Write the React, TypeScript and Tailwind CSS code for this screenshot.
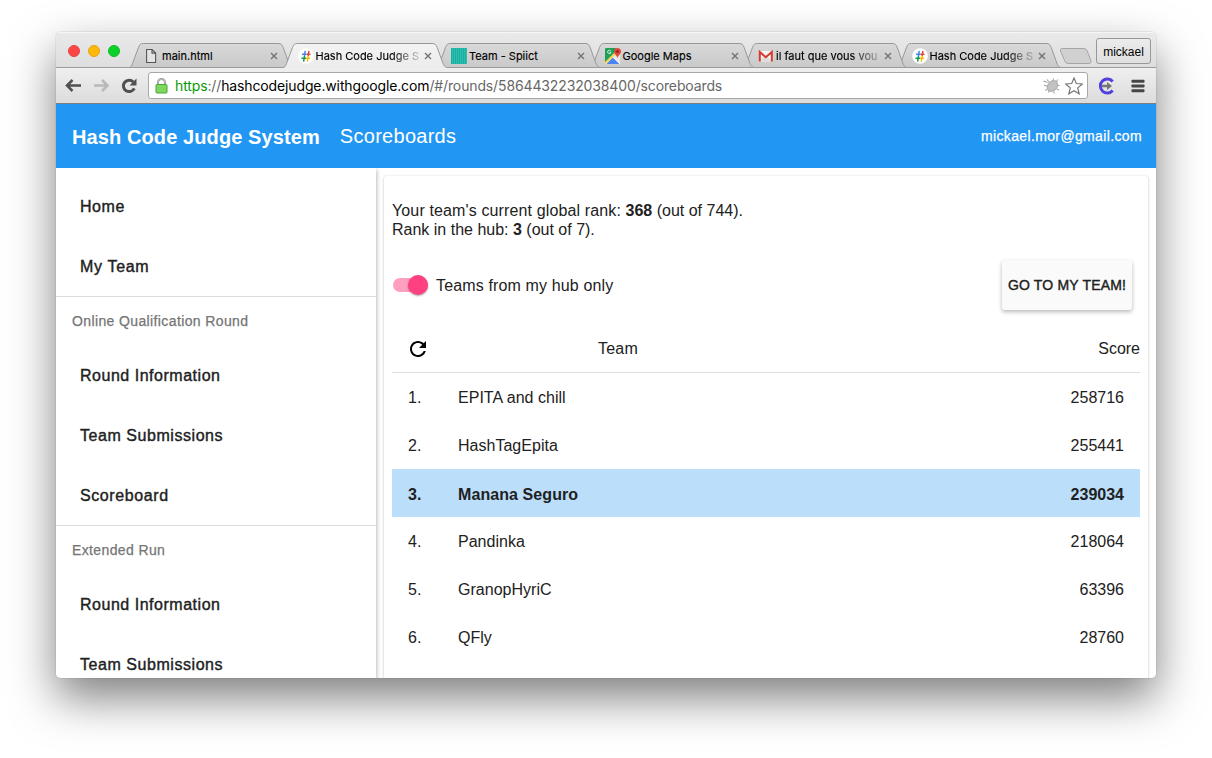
import React from "react";

const MEDIUM = "[-webkit-text-stroke:0.4px_currentColor]";

function HashIcon() {
  return (
    <svg width="16" height="16" viewBox="0 0 16 16" fill="none" strokeWidth="1.5">
      <circle cx="8" cy="8" r="7.800" fill="#fff" stroke="none" />
      <path d="M7.200 2.800 6.500 8" stroke="#4285f4" />
      <path d="M6.500 8 5.600 13.600" stroke="#0f9d58" />
      <path d="M10.900 2.800 10.200 8" stroke="#ea4335" />
      <path d="M10.200 8 9.300 13.600" stroke="#fbbc05" />
      <path d="M4 6.200H8.500" stroke="#4285f4" />
      <path d="M8.500 6.200h4" stroke="#ea4335" />
      <path d="M3.500 10.200H8" stroke="#0f9d58" />
      <path d="M8 10.200h4" stroke="#fbbc05" />
    </svg>
  );
}

function FileIcon() {
  return (
    <svg width="16" height="16" viewBox="0 0 16 16" fill="#e4e4e4" stroke="#555" strokeWidth="1.1">
      <path d="M2.600 1.500h5.400l3.600 3.600v9.400h-9z" />
      <path d="M8 1.500v3.600h3.600" fill="none" />
    </svg>
  );
}

function StripesIcon() {
  return (
    <svg width="16" height="16" viewBox="0 0 16 16">
      <rect width="16" height="16" fill="#13b1a2" />
      {[1, 3, 5, 7, 9, 11, 13, 15].map((x) => (
        <rect key={x} x={x} width="0.8" height="16" fill="#3dbfb2" />
      ))}
    </svg>
  );
}

function MapsIcon() {
  return (
    <svg width="16" height="16" viewBox="0 0 16 16">
      <rect width="15" height="16" rx="1" fill="#e8e8e8" />
      <path d="M0 1a1 1 0 0 1 1-1h10L9.500 6.500 0 15z" fill="#1fa05a" />
      <path d="M1.500 16 8 9.300 15 16z" fill="#4a86f0" />
      <path d="M0 15.500 11 4.500" stroke="#fbd34c" strokeWidth="2" />
      <path d="M8 9.300 15 16" stroke="#fff" strokeWidth="1" />
      <path d="M5.900 3.200A1.700 1.700 0 1 0 6 4.400H4.500" fill="none" stroke="#fff" strokeWidth="0.8" />
      <path d="M12.500 0A3.500 3.500 0 0 1 16 3.500C16 6 13 7 12.500 10.500 12 7 9 6 9 3.500A3.500 3.500 0 0 1 12.500 0z" fill="#e0453a" />
      <circle cx="12.500" cy="3.500" r="1.300" fill="#7b231e" />
    </svg>
  );
}

function GmailIcon() {
  return (
    <svg width="16" height="16" viewBox="0 0 16 16">
      <path d="M1 3h13v10.500H1z" fill="#f5f5f5" />
      <path d="M1 13.500 6 8h3l5 5.500z" fill="#dedede" />
      <path d="M1.800 13.500V4L7.800 9.200 13.800 4v9.500" fill="none" stroke="#d8392f" strokeWidth="2" />
    </svg>
  );
}

function Close() {
  return (
    <svg className="shrink-0" width="8" height="8" viewBox="0 0 8 8" stroke="#727272" strokeWidth="1.4">
      <path d="M1 1l6 6M7 1 1 7" />
    </svg>
  );
}

const tabs = [
  { title: "main.html", icon: <FileIcon />, z: "z-[5]", fade: false },
  { title: "Hash Code Judge S", icon: <HashIcon />, z: "z-10", fade: true },
  { title: "Team - Spiict", icon: <StripesIcon />, z: "z-[4]", fade: false },
  { title: "Google Maps", icon: <MapsIcon />, z: "z-[3]", fade: false },
  { title: "il faut que vous vou", icon: <GmailIcon />, z: "z-[2]", fade: true },
  { title: "Hash Code Judge S", icon: <HashIcon />, z: "z-[1]", fade: true },
];

function TabStrip() {
  return (
    <div className="flex h-9 shrink-0 items-end rounded-t-[5px] border-t border-[#f6f6f6] bg-linear-to-b from-[#e9e9e9] to-[#dedede] shadow-[inset_0_-1px_0_#9b9b9b]">
      <div className="mb-[11px] ml-3 flex gap-2">
        <i className="size-3 rounded-full border border-[#e2443f] bg-[#fc4744]" />
        <i className="size-3 rounded-full border border-[#e6a412] bg-[#fdb90b]" />
        <i className="size-3 rounded-full border border-[#12b82a] bg-[#0bd129]" />
      </div>
      <div className="ml-[8px] flex">
        {tabs.map((t, i) => {
          const active = i === 1;
          return (
            <div key={i} className={`relative mr-[-13.500px] h-[25px] w-[167px] ${t.z}`}>
              <svg className="absolute inset-0" width="167" height="25" viewBox="0 0 167 25">
                <defs>
                  <linearGradient id={`tab${i}`} x1="0" x2="0" y1="0" y2="1">
                    <stop offset="0" stopColor={active ? "#f3f3f3" : "#d9d9d9"} />
                    <stop offset="1" stopColor={active ? "#ececec" : "#c9c9c9"} />
                  </linearGradient>
                </defs>
                <path
                  d="M0 25C3 24.500 3.500 23 4.500 20.500L10.500 4.500C11.700 1.500 12.500 .5 15.500 .5H150C153 .5 154 1.500 155.200 4.500L161 20.500C162 23 163 24.500 167 25"
                  fill={`url(#tab${i})`}
                  stroke="#979797"
                />
                {!active && <path d="M2 24.500H165" stroke="#9b9b9b" />}
              </svg>
              <div className="relative flex h-full items-center pt-px pr-[17px] pl-[16px]">
                <span className="mr-[2px] w-4 shrink-0">{t.icon}</span>
                <span
                  className={`mr-0.5 min-w-0 flex-1 whitespace-nowrap font-[Inter,sans-serif] text-[11px] leading-4 text-black [-webkit-text-stroke:0.150px_currentColor] ${
                    t.fade ? "[mask-image:linear-gradient(to_right,#000_70%,transparent_103%)]" : ""
                  }`}
                >
                  {t.title}
                </span>
                <Close />
              </div>
            </div>
          );
        })}
      </div>
      <svg className="mb-[3px] ml-[10px]" width="34" height="18" viewBox="0 0 34 18">
        <path
          d="M2.500 1.500H25Q27 1.500 28 3.500L32 14Q32.500 16.500 30 16.500H9Q7 16.500 6 14.500L1.500 4Q1 1.500 2.500 1.500z"
          fill="#d0d0d0"
          stroke="#a6a6a6"
        />
      </svg>
      <div className="mr-[5px] mb-[4px] ml-auto flex h-[26px] w-[55px] items-center justify-center rounded-[3px] border border-[#989898] bg-linear-to-b from-[#ececec] to-[#dfdfdf] pt-px text-[12px] text-black">
        mickael
      </div>
    </div>
  );
}

function Toolbar() {
  return (
    <div className="flex h-9 shrink-0 items-center border-b border-[#7d7d7d] bg-linear-to-b from-[#efefef] to-[#dcdcdc]">
      <svg className="ml-[8px]" width="18" height="18" viewBox="0 0 18 18" fill="none" stroke="#505050" strokeWidth="2.500">
        <path d="M3 8.500H17M8.500 3 3 8.500l5.500 5.500" />
      </svg>
      <svg className="ml-[10px]" width="18" height="18" viewBox="0 0 18 18" fill="none" stroke="#b9b9b9" strokeWidth="2.500">
        <path d="M2 8.500h13.500M10 3l5.500 5.500L10 14" />
      </svg>
      <svg className="ml-[10px]" width="18" height="18" viewBox="0 0 18 18" fill="none">
        <path d="M13.300 5A5.700 5.700 0 1 0 14.300 11.300" stroke="#505050" strokeWidth="3" />
        <path d="M16.500 1.500v7h-7z" fill="#505050" />
      </svg>
      <div className="ml-[10px] flex h-[27px] w-[940px] items-center rounded-[3px] border border-[#a8a8a8] bg-white">
        <svg className="ml-[6px]" width="13" height="16" viewBox="0 0 13 16">
          <path d="M3 8V4.500a3.500 3.500 0 0 1 7 0V8" fill="none" stroke="#8c8c8c" strokeWidth="2" />
          <path d="M3 8V4.500a3.500 3.500 0 0 1 7 0V8" fill="none" stroke="#e0e0e0" strokeWidth="0.700" />
          <rect x="1" y="6.500" width="11" height="8.500" rx="0.800" fill="#7fd85e" stroke="#4ea33c" />
        </svg>
        <span className="ml-[7px] font-[Inter,sans-serif] text-[14px] tracking-[-0.130px] whitespace-nowrap text-[#676767]">
          <span className="text-[#0a9a0a]">https</span>://
          <span className="text-black">hashcodejudge.withgoogle.com</span>
          /#/rounds/5864432232038400/scoreboards
        </span>
        <svg className="ml-auto" width="18" height="18" viewBox="0 0 18 18" fill="none" stroke="#a2a2a2" strokeWidth="1.100">
          <path d="M.5 4l4 1.500M1 8l3.500 1.500M6 5 4 2.500M10 4l.5-2.500M13 5l2-2.500M14 8.500h2.500M14 12l2 1M10.500 14.500l1 2M6.500 13 5.500 15.500M4.500 12l-2 1.500" />
          <ellipse cx="9.500" cy="9" rx="5.800" ry="4.600" fill="#c2c2c2" stroke="#adadad" transform="rotate(-50 9.500 9)" />
        </svg>
        <svg className="mr-[4px] ml-[4px]" width="18" height="18" viewBox="0 0 18 18" fill="#fff" stroke="#777" strokeWidth="1.200">
          <path d="M9 1l2.300 5.500 6 .5-4.600 3.900 1.500 5.900L9 13.700l-5.200 3.100 1.500-5.900L.7 7l6-.5z" />
        </svg>
      </div>
      <svg className="ml-[9px]" width="18" height="18" viewBox="0 0 18 18" fill="none">
        <path d="M15.700 4.500A7 7 0 1 0 15.700 13.500" stroke="#5240dc" strokeWidth="2.900" />
        <path d="M5 7.700H10V5l5 4-5 4v-2.700H5z" fill="#777" />
      </svg>
      <svg className="ml-[16px]" width="14" height="14" viewBox="0 0 14 14" fill="#464646">
        <rect x="0.500" y="0.700" width="13" height="3" rx="0.700" />
        <rect x="0.500" y="5.500" width="13" height="3" rx="0.700" />
        <rect x="0.500" y="10.300" width="13" height="3" rx="0.700" />
      </svg>
    </div>
  );
}

function NavItem({ children, track }: { children: string; track: string }) {
  return (
    <div className={`flex h-[60px] shrink-0 items-center pt-0.5 pl-6 text-[16px] text-[#212121] ${MEDIUM} ${track}`}>
      {children}
    </div>
  );
}

function NavHeading({ children }: { children: string }) {
  return (
    <div className="flex h-[49px] shrink-0 items-center border-t border-[#dcdcdc] pl-4 text-[14px] tracking-[0.380px] text-[#757575] [-webkit-text-stroke:0.250px_currentColor]">
      {children}
    </div>
  );
}

const teams = [
  ["1.", "EPITA and chill", "258716"],
  ["2.", "HashTagEpita", "255441"],
  ["3.", "Manana Seguro", "239034"],
  ["4.", "Pandinka", "218064"],
  ["5.", "GranopHyriC", "63396"],
  ["6.", "QFly", "28760"],
];

function Scoreboard() {
  return (
    <div className="mt-2 mr-2 ml-[8px] flex flex-1 flex-col rounded-t-[2px] bg-white px-2 pt-[25px] text-[16px] text-[#212121] shadow-[0_1px_3px_rgba(0,0,0,0.22),0_0_1px_rgba(0,0,0,0.18)]">
      <p className="leading-[19px]">
        <span className="tracking-[0.130px]">
          Your team's current global rank: <b className="tracking-normal">368</b>
        </span>{" "}
        (out of 744).
        <br />
        Rank in the hub: <b>3</b> (out of 7).
      </p>
      <div className="mt-[21px] flex h-[50px] shrink-0 items-center">
        <div className="ml-px flex h-[14px] w-[35px] items-center justify-end rounded-full bg-[#ff9fbf]">
          <span className="size-5 shrink-0 rounded-full bg-[#ff4081] shadow-[0_1px_2px_rgba(0,0,0,0.35)]" />
        </div>
        <span className="ml-2 pt-0.5 tracking-[0.140px]">Teams from my hub only</span>
        <button
          className={`mr-2 ml-auto h-[50px] w-[130px] rounded-[3px] bg-[#fafafa] text-[14px] tracking-[0.180px] whitespace-nowrap shadow-[0_2px_4px_rgba(0,0,0,0.28)] ${MEDIUM}`}
        >
          GO TO MY TEAM!
        </button>
      </div>
      <div className="mt-[14px] flex h-[49px] shrink-0 items-center border-b border-[#dedede] pt-0.5">
        <svg className="ml-[14px]" width="24" height="24" viewBox="0 0 24 24" fill="#000">
          <path d="M17.650 6.350C16.200 4.900 14.210 4 12 4c-4.420 0-7.990 3.580-7.990 8s3.570 8 7.990 8c3.730 0 6.840-2.550 7.730-6h-2.080c-.82 2.330-3.040 4-5.650 4-3.310 0-6-2.690-6-6s2.690-6 6-6c1.660 0 3.140.69 4.220 1.780L13 11h7V4l-2.350 2.350z" />
        </svg>
        <span className="ml-[168px] tracking-[0.200px]">Team</span>
        <span className="ml-auto">Score</span>
      </div>
      {teams.map(([rank, name, score], i) => (
        <div
          key={rank}
          className={`flex h-12 shrink-0 items-center px-4 ${i === 2 ? "bg-[#bbdefb] pt-[3px] font-bold" : "pt-0.5"}`}
        >
          <span className="w-[50px]">{rank}</span>
          <span className={i === 2 ? "tracking-[0.080px]" : "tracking-[0.020px]"}>{name}</span>
          <span className="ml-auto">{score}</span>
        </div>
      ))}
    </div>
  );
}

export default function App() {
  return (
    <div className="h-[758px] w-[1212px] overflow-hidden bg-white px-14 pt-8 font-['Liberation_Sans',Arial,sans-serif]">
      <div className="h-[646px] w-[1100px] rounded-[5px] shadow-[0_20px_46px_rgba(0,0,0,0.5),0_0_1px_rgba(0,0,0,0.55)]">
        <div className="flex h-full flex-col overflow-hidden rounded-[5px] bg-white">
          <TabStrip />
          <Toolbar />
          <header className="flex h-16 shrink-0 items-center bg-[#2196f3] pr-[14px] pl-4 text-white">
            <span className="mt-0.5 text-[20px] font-bold tracking-[0.100px]">Hash Code Judge System</span>
            <span className="ml-5 text-[20px] tracking-[0.280px]">Scoreboards</span>
            <span className="ml-auto text-[14px] tracking-[0.360px] [-webkit-text-stroke:0.250px_currentColor]">
              mickael.mor@gmail.com
            </span>
          </header>
          <main className="flex min-h-0 flex-1 overflow-hidden bg-white">
            <nav className="z-[1] flex w-80 shrink-0 flex-col overflow-hidden bg-white pt-2 shadow-[1px_2px_4px_rgba(0,0,0,0.27)]">
              <NavItem track="tracking-[0.550px]">Home</NavItem>
              <NavItem track="tracking-[0.680px]">My Team</NavItem>
              <NavHeading>Online Qualification Round</NavHeading>
              <NavItem track="tracking-[0.520px]">Round Information</NavItem>
              <NavItem track="tracking-[0.550px]">Team Submissions</NavItem>
              <NavItem track="tracking-[0.600px]">Scoreboard</NavItem>
              <NavHeading>Extended Run</NavHeading>
              <NavItem track="tracking-[0.520px]">Round Information</NavItem>
              <NavItem track="tracking-[0.550px]">Team Submissions</NavItem>
            </nav>
            <Scoreboard />
          </main>
        </div>
      </div>
    </div>
  );
}
